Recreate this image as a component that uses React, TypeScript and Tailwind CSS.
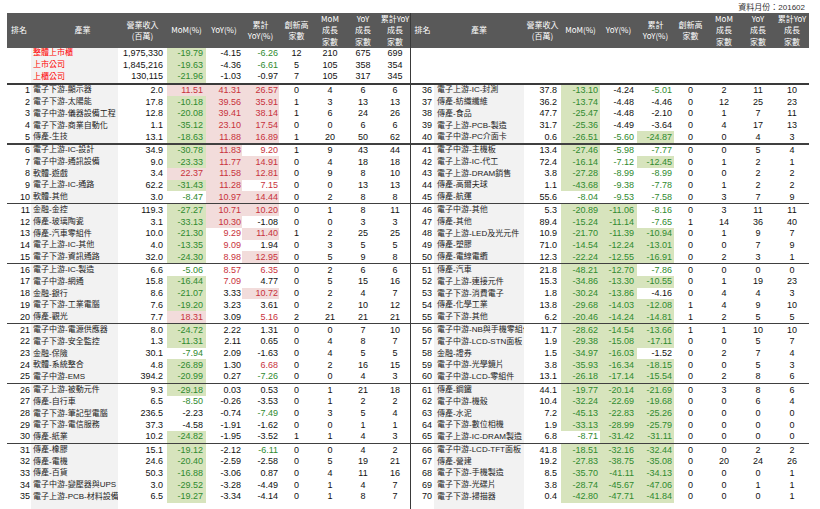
import React from "react";

type Side = "left" | "right";

const cols: Record<Side, string> = {
  left: "grid-cols-[24px_87px_49px_39px_36px_37px_35px_32px_34px_30px]",
  right: "grid-cols-[23px_90px_37px_39px_37px_37px_33px_34px_34px_34px]",
};

const pads: Record<Side, string[]> = {
  left: ["pr-[1px]", "pl-[2px]", "pr-[4px]", "pr-[3px]", "pr-[1px]", "pr-[1px]"],
  right: ["pr-[2px]", "pl-[3px]", "pr-[4px]", "pr-[2px]", "pr-[3px]", "pr-[2px]"],
};

const summary = [
  "整體上市櫃|1,975,330|-19.79|-4.15|-6.26|12|210|675|699",
  "上市公司|1,845,216|-19.63|-4.36|-6.61|5|105|358|354",
  "上櫃公司|130,115|-21.96|-1.03|-0.97|7|105|317|345",
];

const leftRows = [
  "1|電子下游-顯示器|2.0|11.51|41.31|26.57|0|4|6|6",
  "2|電子下游-太陽能|17.8|-10.18|39.56|35.91|1|3|13|13",
  "3|電子中游-儀器設備工程|12.8|-20.08|39.41|38.14|1|6|24|26",
  "4|電子下游-商業自動化|1.1|-35.12|23.10|17.54|0|0|6|6",
  "5|傳產-生技|13.1|-18.63|11.88|16.89|1|20|50|62",
  "6|電子上游-IC-設計|34.9|-30.78|11.83|9.20|1|9|43|44",
  "7|電子中游-通訊設備|9.0|-23.33|11.77|14.91|0|4|18|18",
  "8|軟體-遊戲|3.4|22.37|11.58|12.81|0|9|8|10",
  "9|電子上游-IC-通路|62.2|-31.43|11.28|7.15|0|0|13|13",
  "10|軟體-其他|3.0|-8.47|10.97|14.44|0|2|8|8",
  "11|金融-金控|119.3|-27.27|10.71|10.20|0|1|8|11",
  "12|傳產-玻璃陶瓷|3.1|-33.13|10.30|-1.08|0|0|3|3",
  "13|傳產-汽車零組件|10.0|-21.30|9.29|11.40|1|2|25|25",
  "14|電子上游-IC-其他|4.0|-13.35|9.09|1.94|0|3|5|5",
  "15|電子下游-資訊通路|32.0|-24.30|8.98|12.95|0|5|9|8",
  "16|電子上游-IC-製造|6.6|-5.06|8.57|6.35|0|2|6|6",
  "17|電子中游-網通|15.8|-16.44|7.09|4.77|0|5|15|16",
  "18|金融-銀行|8.6|-21.07|3.33|10.72|0|2|4|7",
  "19|電子下游-工業電腦|7.6|-19.20|3.23|3.61|0|2|10|12",
  "20|傳產-觀光|7.7|18.31|3.09|5.16|2|21|21|21",
  "21|電子中游-電源供應器|8.0|-24.72|2.22|1.31|0|0|7|10",
  "22|電子下游-安全監控|1.3|-11.31|2.11|0.65|0|4|8|7",
  "23|金融-保險|30.1|-7.94|2.09|-1.63|0|4|5|5",
  "24|軟體-系統整合|4.8|-26.89|1.30|6.68|0|2|16|15",
  "25|電子中游-EMS|394.2|-20.99|0.27|-7.26|0|0|4|3",
  "26|電子上游-被動元件|9.3|-29.18|0.03|0.53|0|1|21|18",
  "27|傳產-自行車|6.5|-8.50|-0.26|-3.53|0|1|2|2",
  "28|電子下游-筆記型電腦|236.5|-2.23|-0.74|-7.49|0|3|5|4",
  "29|電子下游-電信服務|37.3|-4.58|-1.91|-1.62|0|0|1|1",
  "30|傳產-紙業|10.2|-24.82|-1.95|-3.52|1|1|4|3",
  "31|傳產-橡膠|15.1|-19.12|-2.12|-6.11|0|0|4|2",
  "32|傳產-電機|24.6|-20.40|-2.59|-2.58|0|5|19|21",
  "33|傳產-百貨|50.3|-16.88|-3.06|0.87|0|4|11|16",
  "34|電子中游-變壓器與UPS|3.0|-29.52|-3.28|-4.49|0|1|4|7",
  "35|電子上游-PCB-材料設備|6.5|-19.27|-3.34|-4.14|0|1|8|7",
];

const rightRows = [
  "36|電子上游-IC-封測|37.8|-13.10|-4.24|-5.01|0|2|11|10",
  "37|傳產-紡織纖維|36.2|-13.74|-4.48|-4.46|0|12|25|23",
  "38|傳產-食品|47.7|-25.47|-4.48|-2.10|0|1|7|11",
  "39|電子上游-PCB-製造|31.7|-25.36|-4.49|-3.64|0|4|17|13",
  "40|電子中游-PC介面卡|0.6|-26.51|-5.60|-24.87|0|0|4|3",
  "41|電子中游-主機板|13.4|-27.46|-5.98|-7.77|0|0|5|4",
  "42|電子上游-IC-代工|72.4|-16.14|-7.12|-12.45|0|1|2|1",
  "43|電子上游-DRAM銷售|3.8|-27.28|-8.99|-8.99|0|0|2|2",
  "44|傳產-高爾夫球|1.1|-43.68|-9.38|-7.78|0|1|2|2",
  "45|傳產-航運|55.6|-8.04|-9.53|-7.58|0|3|7|9",
  "46|電子中游-其他|5.3|-20.89|-11.06|-8.16|0|3|11|11",
  "47|傳產-其他|89.4|-15.24|-11.14|-7.65|1|14|36|40",
  "48|電子上游-LED及光元件|10.9|-21.70|-11.39|-10.94|0|1|9|7",
  "49|傳產-塑膠|71.0|-14.54|-12.24|-13.01|0|0|7|9",
  "50|傳產-電線電纜|12.3|-22.24|-12.55|-16.91|0|2|3|1",
  "51|傳產-汽車|21.8|-48.21|-12.70|-7.86|0|0|0|0",
  "52|電子上游-連接元件|15.3|-34.86|-13.30|-10.55|0|1|19|23",
  "53|電子下游-消費電子|1.8|-30.24|-13.86|-4.16|0|4|4|3",
  "54|傳產-化學工業|13.8|-29.68|-14.03|-12.08|1|4|9|10",
  "55|電子下游-其他|6.2|-20.46|-14.24|-14.81|1|2|5|5",
  "56|電子中游-NB與手機零組件|11.7|-28.62|-14.54|-13.66|1|1|10|10",
  "57|電子中游-LCD-STN面板|1.9|-29.38|-15.08|-17.11|0|0|5|7",
  "58|金融-證券|1.5|-34.97|-16.03|-1.52|0|2|7|4",
  "59|電子中游-光學鏡片|3.8|-35.93|-16.34|-18.15|0|0|5|3",
  "60|電子中游-LCD-零組件|13.1|-26.18|-17.14|-15.54|0|2|8|6",
  "61|傳產-鋼鐵|44.1|-19.77|-20.14|-21.69|0|3|8|6",
  "62|電子中游-機殼|10.4|-32.24|-22.69|-19.68|0|0|6|4",
  "63|傳產-水泥|7.2|-45.13|-22.83|-25.26|0|0|0|0",
  "64|電子下游-數位相機|1.9|-33.13|-28.99|-25.79|0|0|0|0",
  "65|電子上游-IC-DRAM製造|6.8|-8.71|-31.42|-31.11|0|0|0|0",
  "66|電子中游-LCD-TFT面板|41.8|-18.51|-32.16|-32.44|0|0|2|2",
  "67|傳產-營建|19.2|-27.83|-38.75|-35.08|0|20|24|26",
  "68|電子下游-手機製造|8.5|-35.70|-41.11|-34.13|0|0|0|1",
  "69|電子下游-光碟片|3.8|-28.74|-45.67|-47.06|0|0|1|1",
  "70|電子下游-掃描器|0.4|-42.80|-47.71|-41.84|0|0|0|1",
];

// conditional formatting: fill at +/-10, font colour at +/-5
function pctClass(s: string) {
  const v = parseFloat(s);
  const bg = v <= -10 ? "bg-[#d7e4bd]" : v >= 10 ? "bg-[#f2dcdb]" : "";
  const fg = v <= -5 ? "text-[#2f8a2f]" : v >= 5 ? "text-[#c8323c]" : "text-[#111]";
  return `${bg} ${fg}`;
}

const Header: React.FC<{ side: Side }> = ({ side }) => {
  const heads: React.ReactNode[] = [
    "排名",
    "產業",
    <>營業收入<br />(百萬)</>,
    "MoM(%)",
    "YoY(%)",
    <>累計<br />YoY(%)</>,
    <>創新高<br />家數</>,
    <>MoM<br />成長<br />家數</>,
    <>YoY<br />成長<br />家數</>,
    <>累計YoY<br />成長<br />家數</>,
  ];
  return (
    <div
      className={`grid ${cols[side]} h-[35px] bg-[#595959] text-white text-[8px] leading-[11.5px] font-['Noto_Sans_CJK_TC',sans-serif]`}
    >
      {heads.map((h, i) => (
        <div
          key={i}
          className={`flex items-center justify-center text-center whitespace-nowrap ${
            side === "left" && i === 1 ? "pl-[16px]" : ""
          }`}
        >
          <span>{h}</span>
        </div>
      ))}
    </div>
  );
};

const DataRow: React.FC<{ line: string; side: Side; label?: boolean }> = ({ line, side, label }) => {
  const parts = line.split("|");
  const cells = label ? ["", ...parts] : parts;
  const [rank, name, rev, mom, yoy, cum, ...counts] = cells;
  const p = pads[side];
  return (
    <div className={`grid ${cols[side]} h-[11.7px] text-[9px] leading-none text-[#111]`}>
      <div className={`flex items-center justify-end ${p[0]}`}>{rank}</div>
      <div
        className={`flex items-center bg-[#f2f2f2] ${p[1]} text-[8px] whitespace-nowrap overflow-hidden ${
          label ? "text-[#ff0000]" : "text-[#222]"
        }`}
      >
        {name}
      </div>
      <div className={`flex items-center justify-end ${p[2]}`}>{rev}</div>
      <div className={`flex items-center justify-end ${p[3]} ${pctClass(mom)}`}>{mom}</div>
      <div className={`flex items-center justify-end ${p[4]} ${pctClass(yoy)}`}>{yoy}</div>
      <div className={`flex items-center justify-end ${p[5]} ${pctClass(cum)}`}>{cum}</div>
      {counts.map((c, i) => (
        <div key={i} className="flex items-center justify-center">
          {c}
        </div>
      ))}
    </div>
  );
};

const Table: React.FC<{ side: Side; rows: string[] }> = ({ side, rows }) => {
  const groups: string[][] = [];
  for (let i = 0; i < rows.length; i += 5) groups.push(rows.slice(i, i + 5));
  return (
    <div className={`flex flex-col ${side === "right" ? "border-l-[1.5px] border-[#3a3a3a]" : ""}`}>
      <Header side={side} />
      <div className="h-[35.1px]">
        {side === "left" && summary.map((s) => <DataRow key={s} line={s} side={side} label />)}
      </div>
      <div className="h-[2px] bg-[#3a3a3a]" />
      {groups.map((g, gi) => (
        <div key={gi}>
          {gi > 0 && <div className="h-[1.5px] bg-[#404040]" />}
          {g.map((r) => (
            <DataRow key={r} line={r} side={side} />
          ))}
        </div>
      ))}
      <div className={`grid ${cols[side]} flex-1`}>
        <div />
        <div className="bg-[#f2f2f2]" />
      </div>
    </div>
  );
};

export default function App() {
  return (
    <div className="w-[820px] h-[509px] overflow-hidden bg-white font-['Liberation_Sans','Noto_Sans_CJK_TC',sans-serif]">
      <div className="h-[12.5px] flex items-end justify-end pr-[15px] pb-[1px] text-[8px] leading-none text-[#333]">
        資料月份：201602
      </div>
      <div className="flex h-[496.5px] pl-[7px]">
        <Table side="left" rows={leftRows} />
        <Table side="right" rows={rightRows} />
      </div>
    </div>
  );
}
